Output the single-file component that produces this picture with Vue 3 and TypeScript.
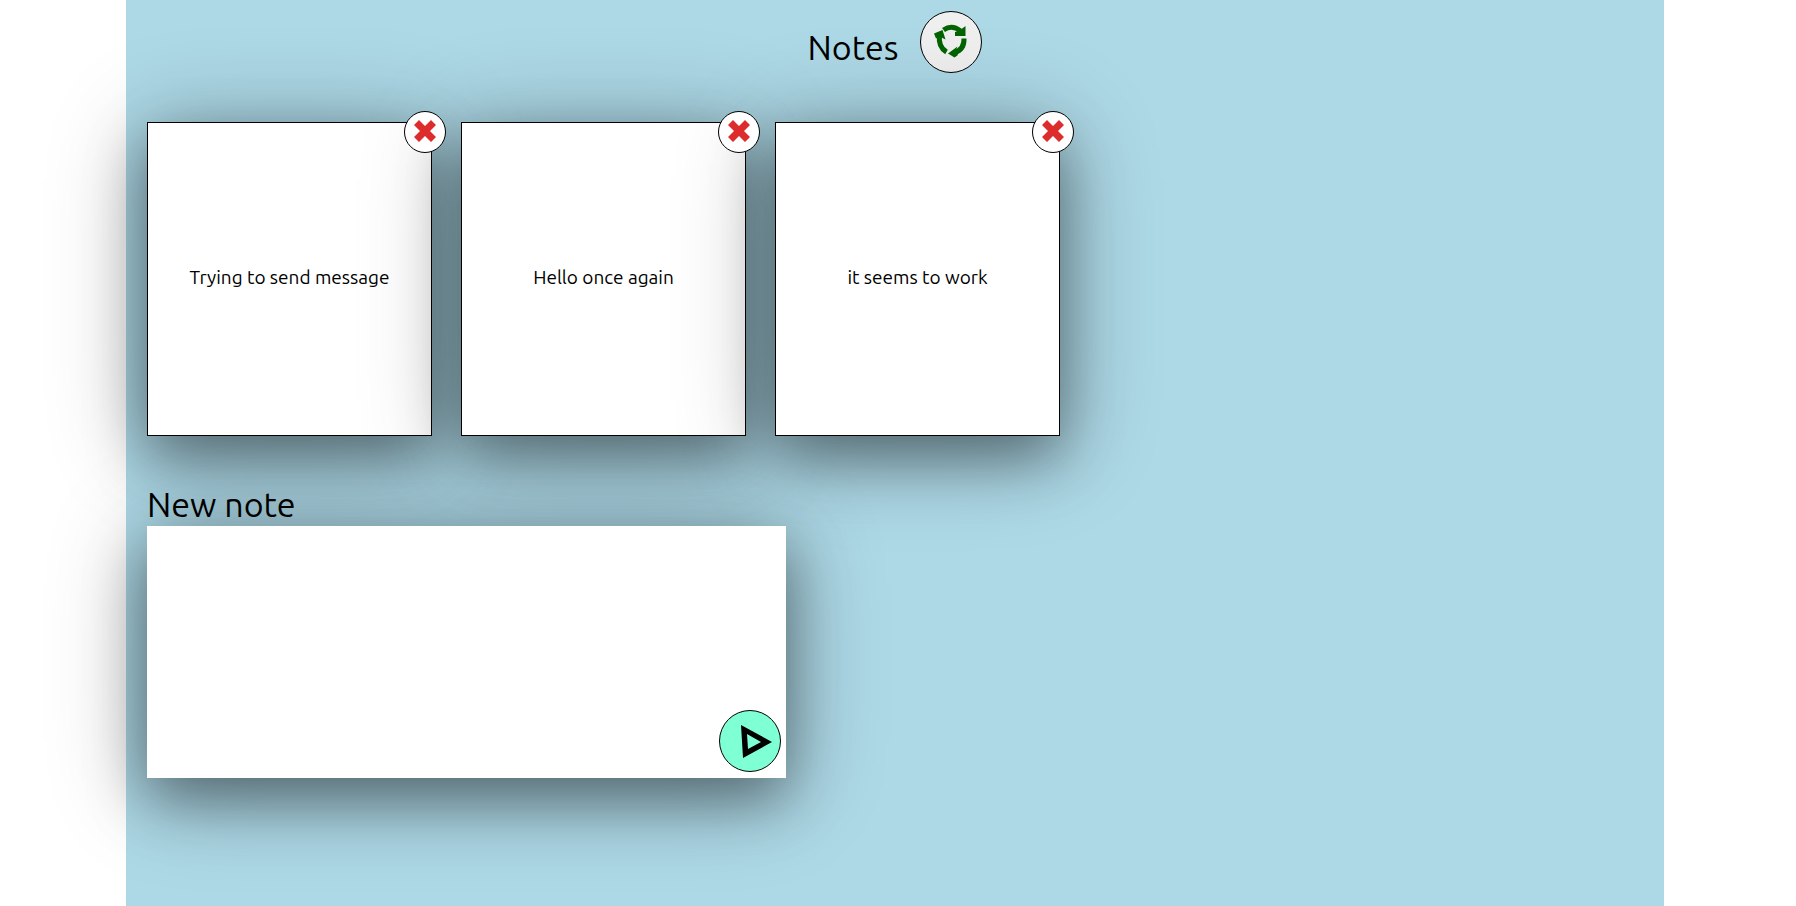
<script setup lang="ts">
import { ref } from 'vue'

interface Note {
  id: number
  text: string
}

const notes = ref<Note[]>([
  { id: 1, text: 'Trying to send message' },
  { id: 2, text: 'Hello once again' },
  { id: 3, text: 'it seems to work' },
])
const draft = ref('')

function addNote(): void {
  const text = draft.value.trim()
  if (!text) return
  notes.value.push({ id: Date.now(), text })
  draft.value = ''
}

function removeNote(id: number): void {
  notes.value = notes.value.filter((note) => note.id !== id)
}
</script>

<template>
  <main class="board">
    <header class="header">
      <h1 class="title">Notes</h1>
      <button class="round refresh" type="button" aria-label="Refresh notes">
        <svg viewBox="0 0 34 34" width="34" height="34" aria-hidden="true">
          <g fill="none" stroke="#006400" stroke-width="5">
            <path d="M9.500 6Q18 0 26.500 7" />
            <path d="M30 14.500Q30.500 25 21 28.500" />
            <path d="M12.500 28Q4 23 5.500 11" />
          </g>
          <g fill="#006400">
            <path d="M31.500 2V12H21V8L25 7Z" />
            <path d="M14 29.500L23.500 22.500L22 26L24 31L20.500 33.500Z" />
            <path d="M0 9.500L8.500 6L11.500 15.500L6.500 13L2 14.500Z" />
          </g>
        </svg>
      </button>
    </header>

    <ul class="notes">
      <li v-for="note in notes" :key="note.id" class="note">
        <p class="text">{{ note.text }}</p>
        <button class="remove" type="button" :aria-label="`Delete note: ${note.text}`" @click="removeNote(note.id)">
          <svg viewBox="0 0 22 22" width="22" height="22" aria-hidden="true">
            <path
              d="M5 0L11 6L17 0L22 5L16 11L22 17L17 22L11 16L5 22L0 17L6 11L0 5Z"
              fill="#dd2c2c"
            />
          </svg>
        </button>
      </li>
    </ul>

    <form class="composer" @submit.prevent="addNote">
      <label class="title label" for="new-note">New note</label>
      <div class="field">
        <textarea id="new-note" v-model="draft" class="input"></textarea>
        <button class="round send" type="submit" aria-label="Send note">
          <svg viewBox="0 0 62 62" width="62" height="62" aria-hidden="true">
            <path
              d="M21 14L52 31L23 47ZM27 23L28 38L41 31Z"
              fill="#000"
              fill-rule="evenodd"
            />
          </svg>
        </button>
      </div>
    </form>
  </main>
</template>

<style>
body {
  margin: 0;
  background: #fff;
}
</style>

<style scoped>
.board {
  box-sizing: border-box;
  min-height: 100vh;
  margin: 0 132px 0 126px;
  padding: 11px 21px 48px;
  background: lightblue;
  color: #000;
  font: 19px/24px Ubuntu, "Noto Sans", sans-serif;
  --shadow: 0 10px 100px rgba(0, 0, 0, 0.3), 0 22px 54px rgba(0, 0, 0, 0.38);
}

.header {
  display: flex;
  align-items: center;
  justify-content: center;
  gap: 22px;
}

.title {
  margin: 0;
  font-size: 34px;
  font-weight: 400;
  line-height: 40px;
}

.header .title {
  padding-top: 10px;
}

.round {
  box-sizing: border-box;
  display: grid;
  place-items: center;
  width: 62px;
  height: 62px;
  padding: 0;
  border: 1px solid #000;
  border-radius: 50%;
  cursor: pointer;
}

.refresh {
  padding-bottom: 2px;
  background: #efefef;
}

.notes {
  display: flex;
  flex-wrap: wrap;
  gap: 29px;
  margin: 49px 0 0;
  padding: 0;
  list-style: none;
}

.note {
  position: relative;
  box-sizing: border-box;
  display: grid;
  place-items: center;
  width: 285px;
  min-height: 314px;
  padding: 20px 20px 24px;
  border: 1px solid #000;
  background: #fff;
  box-shadow: var(--shadow);
}

.text {
  margin: 0;
  text-align: center;
  overflow-wrap: anywhere;
}

.remove {
  position: absolute;
  z-index: 1;
  top: -12px;
  right: -15px;
  box-sizing: border-box;
  display: grid;
  place-items: center;
  width: 42px;
  height: 42px;
  padding: 0 0 2px;
  border: 1px solid #000;
  border-radius: 50%;
  background: #fff;
  cursor: pointer;
}

.composer {
  position: relative;
  max-width: 639px;
  margin-top: 48px;
}

.label {
  position: relative;
  z-index: 1;
  display: block;
  padding-bottom: 2px;
}

.field {
  position: relative;
}

.input {
  box-sizing: border-box;
  display: block;
  width: 100%;
  height: 252px;
  padding: 21px;
  border: 0;
  outline: 0;
  resize: none;
  background: #fff;
  box-shadow: var(--shadow);
  font: inherit;
}

.send {
  position: absolute;
  right: 5px;
  bottom: 6px;
  overflow: hidden;
  background: aquamarine;
}
</style>
